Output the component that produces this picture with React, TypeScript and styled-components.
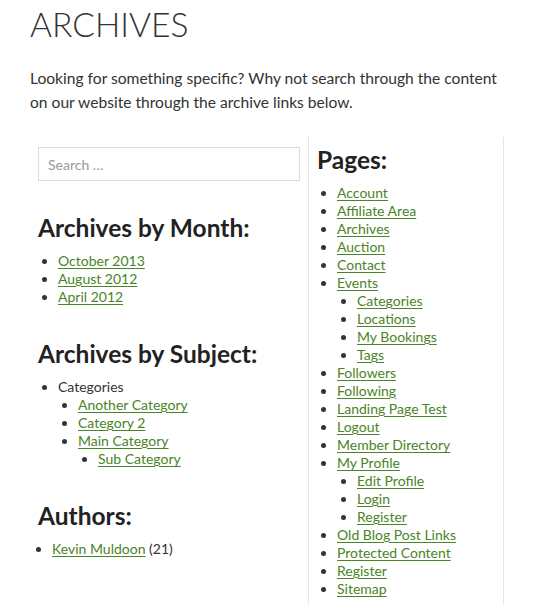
import React from "react";
import styled, { createGlobalStyle } from "styled-components";

const Global = createGlobalStyle`
  html, body { margin: 0; padding: 0; background: #fff; }
  body { font-family: Lato, "Open Sans", "Liberation Sans", sans-serif; color: #333; }
`;

const Page = styled.div`
  padding: 0 30px;
`;

const Title = styled.h1`
  margin: 3px 0 0;
  font-family: Lato, sans-serif;
  font-weight: 300;
  font-size: 33.6px;
  line-height: 42px;
  color: #333;
`;

const Intro = styled.p`
  margin: 21px 0 0;
  font-size: 15.6px;
  line-height: 24px;
  color: #333;
`;

const Columns = styled.div`
  display: flex;
  align-items: flex-start;
  gap: 8px;
  margin: 23px 0 0 8px;
`;

const LeftCol = styled.div`
  width: 262px;
  padding-top: 10px;
`;

const RightCol = styled.div`
  width: 186px;
  padding: 7px 0 40px 8px;
  border-left: 1px solid #e6e6e6;
  border-right: 1px solid #e6e6e6;
`;

const SearchInput = styled.input`
  box-sizing: border-box;
  display: block;
  width: 262px;
  height: 34px;
  border: 1px solid #ddd;
  padding: 0 9px;
  font-family: Lato, sans-serif;
  font-size: 14px;
  color: #333;
  background: #fff;
  outline: none;
  &::placeholder { color: #999; }
`;

const Heading = styled.h2<{ $first?: boolean }>`
  margin: ${(p) => (p.$first ? "31px" : "32px")} 0 8px;
  font-family: Lato, sans-serif;
  font-weight: 700;
  font-size: 24.5px;
  line-height: 32px;
  color: #222;
`;

const PagesHeading = styled(Heading)`
  margin: 0 0 8px;
`;

const List = styled.ul<{ $indent?: number }>`
  margin: 0;
  padding-left: ${(p) => p.$indent ?? 20}px;
  font-size: 14px;
  line-height: 18px;
  list-style: disc;
  ul { padding-left: 20px; }
`;

const Item = styled.li`
  color: #333;
`;

const Link = styled.a`
  color: #4a8426;
  text-decoration: underline;
  text-underline-offset: 2px;
`;

type Node = { label: string; link?: boolean; children?: Node[]; extra?: string };

const Tree = ({ nodes, indent }: { nodes: Node[]; indent?: number }) => (
  <List $indent={indent}>
    {nodes.map((n, i) => (
      <Item key={i}>
        {n.link === false ? n.label : <Link href="#">{n.label}</Link>}
        {n.extra}
        {n.children && <Tree nodes={n.children} />}
      </Item>
    ))}
  </List>
);

const months: Node[] = [
  { label: "October 2013" },
  { label: "August 2012" },
  { label: "April 2012" },
];

const subjects: Node[] = [
  {
    label: "Categories",
    link: false,
    children: [
      { label: "Another Category" },
      { label: "Category 2" },
      { label: "Main Category", children: [{ label: "Sub Category" }] },
    ],
  },
];

const authors: Node[] = [{ label: "Kevin Muldoon", extra: " (21)" }];

const pages: Node[] = [
  { label: "Account" },
  { label: "Affiliate Area" },
  { label: "Archives" },
  { label: "Auction" },
  { label: "Contact" },
  {
    label: "Events",
    children: [
      { label: "Categories" },
      { label: "Locations" },
      { label: "My Bookings" },
      { label: "Tags" },
    ],
  },
  { label: "Followers" },
  { label: "Following" },
  { label: "Landing Page Test" },
  { label: "Logout" },
  { label: "Member Directory" },
  {
    label: "My Profile",
    children: [{ label: "Edit Profile" }, { label: "Login" }, { label: "Register" }],
  },
  { label: "Old Blog Post Links" },
  { label: "Protected Content" },
  { label: "Register" },
  { label: "Sitemap" },
];

export default function App() {
  return (
    <Page>
      <Global />
      <Title>ARCHIVES</Title>
      <Intro>
        Looking for something specific? Why not search through the content on our website through the
        archive links below.
      </Intro>
      <Columns>
        <LeftCol>
          <SearchInput type="search" placeholder="Search …" />
          <Heading $first>Archives by Month:</Heading>
          <Tree nodes={months} />
          <Heading>Archives by Subject:</Heading>
          <Tree nodes={subjects} />
          <Heading>Authors:</Heading>
          <Tree nodes={authors} indent={14} />
        </LeftCol>
        <RightCol>
          <PagesHeading>Pages:</PagesHeading>
          <Tree nodes={pages} />
        </RightCol>
      </Columns>
    </Page>
  );
}
